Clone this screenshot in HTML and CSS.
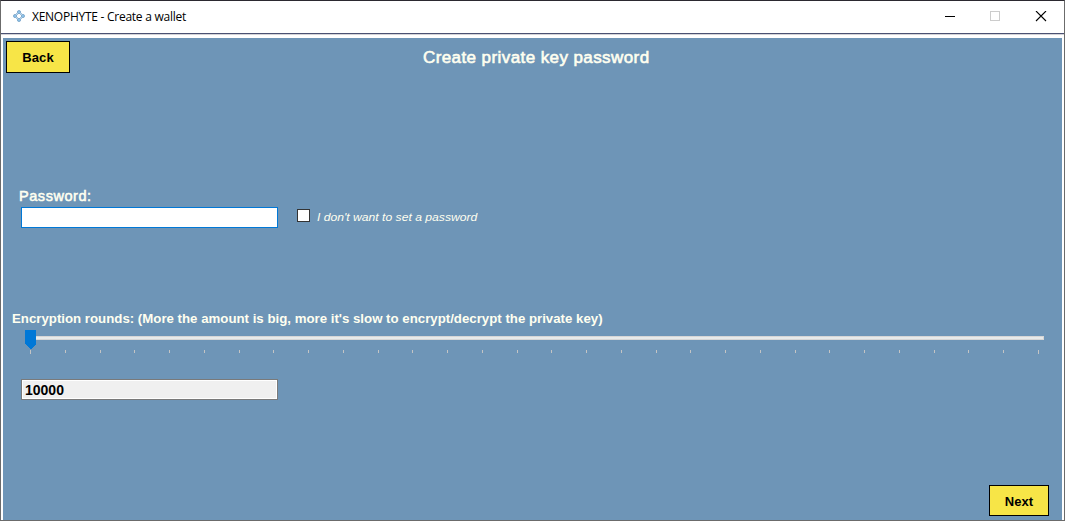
FILE: index.html
```html
<!DOCTYPE html>
<html lang="en">
<head>
<meta charset="utf-8">
<title>XENOPHYTE - Create a wallet</title>
<link rel="stylesheet" href="styles.css">
</head>
<body>
<div class="window">
  <header class="titlebar">
    <svg class="logo" width="12" height="12" viewBox="0 0 12 12">
      <g fill="#8fc4ea" stroke="#6f9cc4" stroke-width=".8">
        <circle cx="6" cy="2.1" r="1.6"/><circle cx="2.1" cy="6" r="1.6"/><circle cx="9.9" cy="6" r="1.6"/><circle cx="6" cy="9.9" r="1.6"/>
      </g>
      <path d="M3.3 3.3l1.4 1.4M8.7 3.3L7.3 4.7M3.3 8.7l1.4-1.4M8.7 8.7L7.3 7.3" stroke="#7daed6" stroke-width="1.2"/>
    </svg>
    <span class="caption">XENOPHYTE - Create a wallet</span>
    <svg class="controls" width="102" height="12" viewBox="0 0 102 12" shape-rendering="crispEdges">
      <path d="M0 5.5h10" stroke="#000"/>
      <rect x="45.5" y=".5" width="9" height="9" fill="none" stroke="#ccc"/>
      <path d="M91 0l10 10M101 0l-10 10" stroke="#000" stroke-width="1.1" shape-rendering="auto"/>
    </svg>
  </header>
  <main class="panel">
    <div class="top">
      <button class="btn back">Back</button>
      <h1 class="heading">Create private key password</h1>
    </div>
    <section class="password">
      <label class="label" for="pw">Password:</label>
      <div class="row">
        <input id="pw" class="field focused" type="password">
        <label class="check"><span class="box"></span><span class="hint">I don't want to set a password</span></label>
      </div>
    </section>
    <section class="rounds">
      <div class="rounds-label">Encryption rounds: (More the amount is big, more it's slow to encrypt/decrypt the private key)</div>
      <svg class="slider" width="1022" height="26" viewBox="0 0 1022 26" shape-rendering="crispEdges">
        <rect x="4" y="6" width="1018" height="4" fill="#d6d6d6"/>
        <rect x="5" y="7" width="1016" height="2" fill="#e7eaea"/>
        <path d="M3 0h11v14l-5.5 5.5L3 14z" fill="#0078d7"/>
        <path d="M8.5 20v4M1016.5 20v4M43.5 20v3M78.5 20v3M112.5 20v3M147.5 20v3M182.5 20v3M217.5 20v3M251.5 20v3M286.5 20v3M321.5 20v3M356.5 20v3M390.5 20v3M425.5 20v3M460.5 20v3M495.5 20v3M529.5 20v3M564.5 20v3M599.5 20v3M634.5 20v3M668.5 20v3M703.5 20v3M738.5 20v3M773.5 20v3M807.5 20v3M842.5 20v3M877.5 20v3M912.5 20v3M946.5 20v3M981.5 20v3" stroke="#c4c4c4"/>
      </svg>
      <input class="field amount" value="10000" readonly>
    </section>
    <button class="btn next">Next</button>
  </main>
</div>
</body>
</html>
```
FILE: styles.css
```css
* { box-sizing: border-box; }
body { margin: 0; font-family: "Liberation Sans", Arial, sans-serif; overflow: hidden; }
.window {
  width: 1065px; height: 521px; display: flex; flex-direction: column;
  background: #fff; border: 1px solid #6b6b6b; border-top-color: #2b2930;
}
.titlebar {
  height: 34px; flex: none; display: flex; align-items: flex-start; padding: 0 17px 0 12px;
  border-bottom: 1px solid #d3d3d8; box-shadow: inset 0 -1px #4b5273;
}
.logo { margin-top: 9px; }
.caption {
  font: 12px/16px "Open Sans", "Noto Sans", sans-serif; color: #000;
  margin: 8px auto 0 7px; letter-spacing: -.26px; white-space: nowrap;
}
.controls { margin-top: 10px; }
.panel {
  flex: 1; margin: 3px 1px 0 2px; background: #6e95b7; color: #fffff0;
  display: flex; flex-direction: column; border-right: 1px solid #fff;
  padding: 3px 13px 4px 3px;
}
.top { display: flex; height: 32px; }
.btn {
  border: 1px solid #000; border-radius: 0; background: #f7e547; color: #000;
  font: bold 13px/16px "Liberation Sans", Arial, sans-serif; padding: 2px 0 0; letter-spacing: .1px;
}
.back { width: 64px; height: 32px; }
.heading {
  margin: 7px 0 0 353px; font-size: 17px; line-height: 19px; font-weight: normal; white-space: nowrap;
  -webkit-text-stroke: .6px #fffff0; letter-spacing: .41px;
}
.password { margin: 115px 0 0 13px; }
.label {
  display: block; height: 19px; font-size: 14.5px; line-height: 16px; font-weight: normal;
  -webkit-text-stroke: .55px #fffff0; letter-spacing: .55px;
}
.row { display: flex; margin-left: 2px; }
.field {
  display: block; width: 257px; height: 21px; border: 1px solid #7a7a7a; border-radius: 0;
  outline: none; padding: 1px 3px 0; font: bold 13px/16px "Liberation Sans", Arial, sans-serif; color: #000;
}
.focused { border-color: #0078d7; background: #fff; }
.check { display: flex; margin-left: 19px; }
.box { width: 13px; height: 13px; margin-top: 2px; border: 1px solid #333; background: #fff; }
.hint {
  margin: 3px 0 0 7px; font-size: 11.5px; line-height: 15px; font-style: italic; white-space: nowrap;
  transform: scaleX(1.056); transform-origin: 0 0;
}
.rounds { margin: 83px 0 0 6px; }
.rounds-label {
  height: 19px; padding-top: 1px; font-size: 12px; line-height: 15px; font-weight: bold; white-space: nowrap;
  width: max-content; transform: scaleX(1.104); transform-origin: 0 0;
}
.slider { display: block; margin-left: 10px; }
.amount { margin: 23px 0 0 9px; background: #f0f0f0; box-shadow: inset 0 0 0 1px #fff; font-size: 14px; }
.next { width: 60px; height: 31px; margin: auto 0 0 auto; }
```
